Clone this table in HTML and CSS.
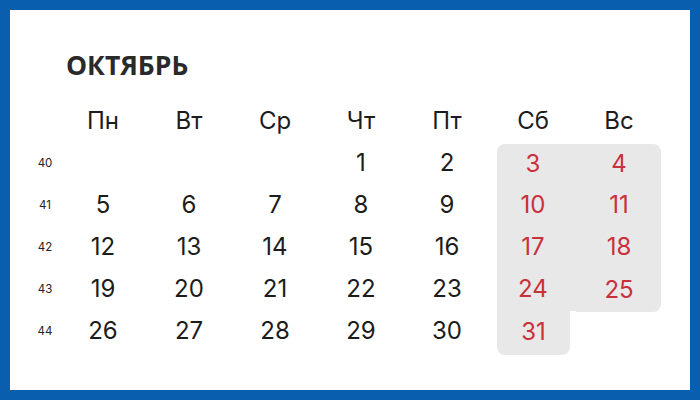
FILE: index.html
```html
<!DOCTYPE html>
<html lang="ru">
<head>
<meta charset="utf-8">
<link rel="stylesheet" href="styles.css">
</head>
<body>
<div class="frame">
  <h1 class="title">ОКТЯБРЬ</h1>
  <div class="cal">
    <div class="wk"></div>
    <div class="hd">Пн</div><div class="hd">Вт</div><div class="hd">Ср</div><div class="hd">Чт</div><div class="hd">Пт</div><div class="hd">Сб</div><div class="hd">Вс</div>

    <div class="wk">40</div>
    <div class="d"></div><div class="d"></div><div class="d"></div><div class="d">1</div><div class="d">2</div><div class="d sat top">3</div><div class="d sun top">4</div>

    <div class="wk">41</div>
    <div class="d">5</div><div class="d">6</div><div class="d">7</div><div class="d">8</div><div class="d">9</div><div class="d sat">10</div><div class="d sun">11</div>

    <div class="wk">42</div>
    <div class="d">12</div><div class="d">13</div><div class="d">14</div><div class="d">15</div><div class="d">16</div><div class="d sat">17</div><div class="d sun">18</div>

    <div class="wk">43</div>
    <div class="d">19</div><div class="d">20</div><div class="d">21</div><div class="d">22</div><div class="d">23</div><div class="d sat">24</div><div class="d sun end">25</div>

    <div class="wk">44</div>
    <div class="d">26</div><div class="d">27</div><div class="d">28</div><div class="d">29</div><div class="d">30</div><div class="d sat last">31</div><div class="d"></div>
  </div>
</div>
</body>
</html>
```
FILE: styles.css
```css
html, body {
  margin: 0;
  padding: 0;
  background: #ffffff;
}

.frame {
  width: 700px;
  height: 400px;
  box-sizing: border-box;
  border: 10px solid #0a5eae;
  background: #ffffff;
  overflow: hidden;
}

.title {
  margin: 0;
  padding: 37px 0 0 56px;
  font-family: "Open Sans", "Liberation Sans", sans-serif;
  font-weight: 700;
  font-size: 26.5px;
  line-height: 36px;
  color: #2a2a2a;
  letter-spacing: 0;
}

.cal {
  margin: 18px 0 0 20px;
  display: grid;
  grid-template-columns: 30px repeat(7, 86px);
  grid-auto-rows: 42px;
  font-family: Inter, "Noto Sans", sans-serif;
  color: #1c1c1c;
}

.wk {
  display: flex;
  align-items: center;
  justify-content: center;
  font-size: 11.5px;
  color: #222;
  padding-bottom: 3px;
}

.hd, .d {
  display: flex;
  align-items: center;
  justify-content: center;
  font-size: 24px;
  padding-bottom: 3px;
}

.sat, .sun {
  background: #e8e8e8;
  color: #c8313c;
}

.sat {
  margin-left: 7px;
  padding-right: 7px;
}

.sun {
  margin-right: 1px;
  padding-left: 1px;
}

.sat.top {
  border-top-left-radius: 8px;
  margin-top: 1px;
}

.sun.top {
  border-top-right-radius: 8px;
  margin-top: 1px;
}

.sun.end {
  border-bottom-right-radius: 8px;
  margin-bottom: -1px;
}

.sat.last {
  margin-right: 6px;
  padding-right: 0;
  margin-bottom: -2px;
  border-bottom-left-radius: 8px;
  border-bottom-right-radius: 8px;
}
```
